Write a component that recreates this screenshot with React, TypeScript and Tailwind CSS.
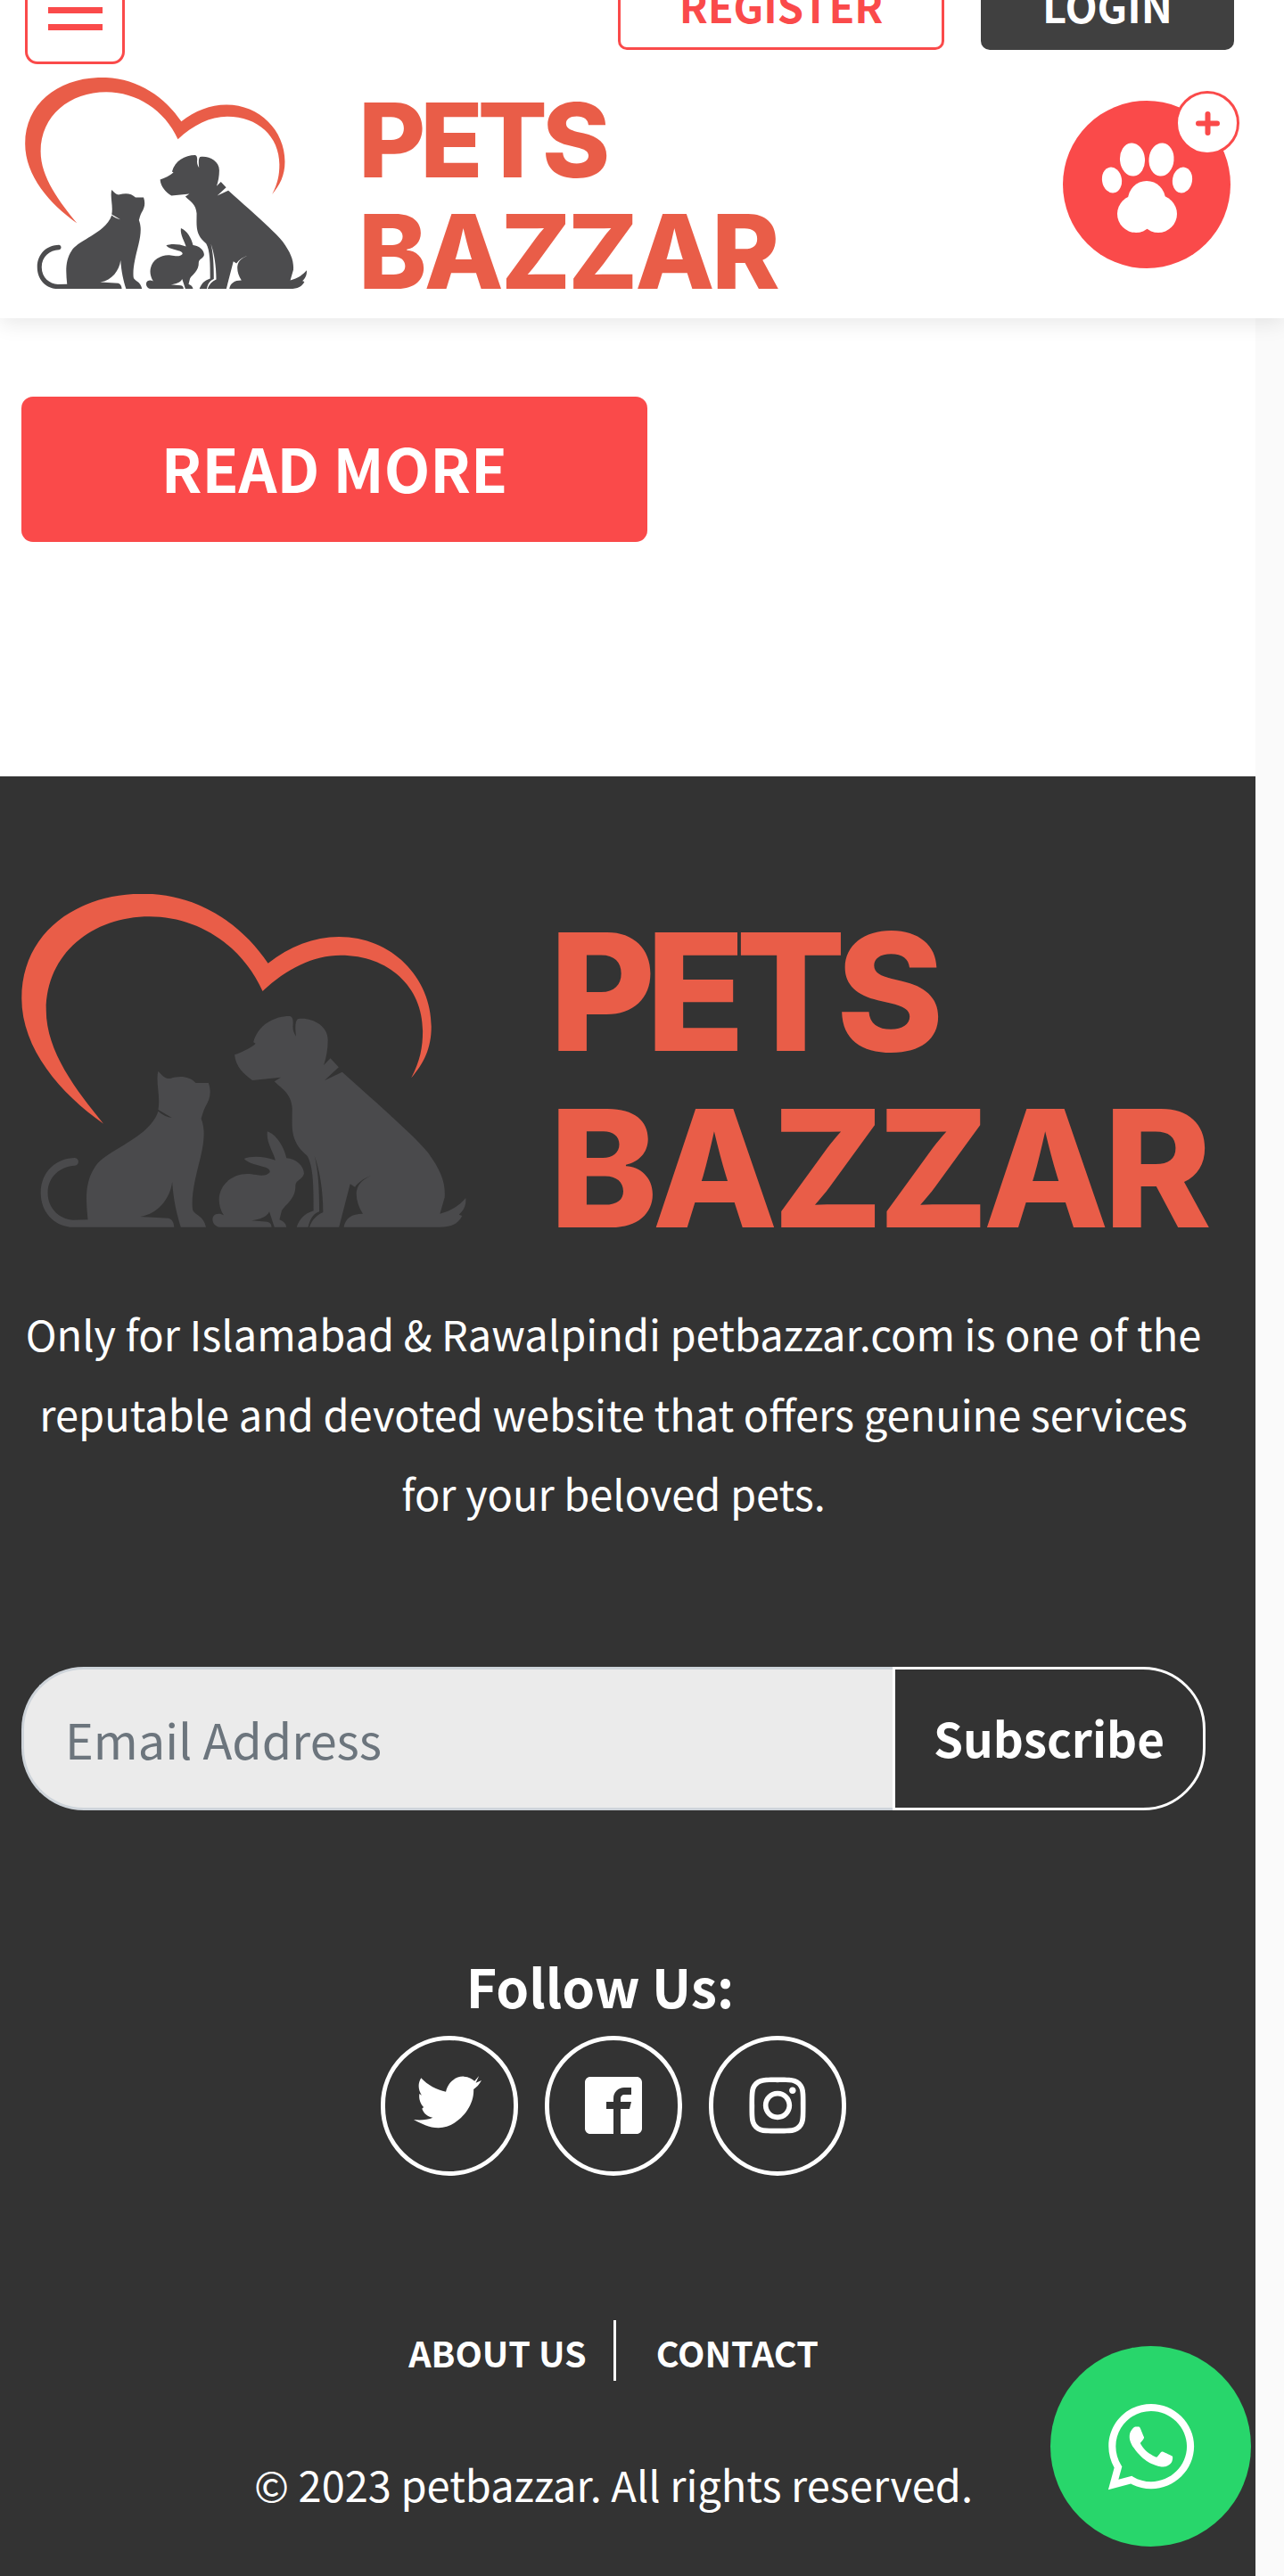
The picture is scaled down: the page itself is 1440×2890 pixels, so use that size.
import { FaInstagram, FaWhatsapp } from 'react-icons/fa'
import { ImFacebook2 } from 'react-icons/im'

/* Logo drawing, points taken from the footer logo */
const LogoMark: React.FC<{ className: string; animal: string }> = ({ className, animal }) => (
  <svg viewBox="24 1003 500 375" className={className}>
    <g transform="translate(0 980) scale(0.357 0.3333)">
      <path
        fill="#e95d48"
        d="M325,842 C190,740 68,590 68,420 C68,200 240,68 450,68 C620,68 760,170 842,302 C910,245 985,213 1065,213 C1230,213 1355,350 1355,515 C1355,590 1330,640 1292,688 C1320,630 1328,585 1328,530 C1328,380 1220,275 1070,275 C985,275 900,320 825,396 C760,240 620,145 470,145 C290,145 145,270 145,460 C145,600 240,730 325,842 Z"
      />
      {/* dog */}
      <path
        fill={animal}
        d="M737,610 C760,600 785,590 803,572 L796,568 C810,510 860,480 910,480 C920,482 922,495 920,515 C920,530 925,540 930,548 C928,530 925,500 935,490 C975,482 1030,510 1030,560 C1030,590 1025,620 1017,645 L1038,622 L1064,652 L1020,696 L1075,668 C1170,760 1290,870 1345,940 C1385,1000 1400,1040 1397,1090 L1382,1145 C1420,1135 1445,1115 1463,1092 C1465,1120 1455,1135 1442,1148 L1452,1152 C1440,1178 1420,1190 1380,1190 L1080,1190 C1085,1160 1105,1145 1140,1145 C1125,1120 1118,1095 1120,1070 C1125,1040 1145,1025 1175,1013 C1150,1022 1128,1035 1115,1055 L1100,1045 L1065,1190 L972,1190 C980,1165 995,1150 1015,1140 C1015,1070 1005,1000 988,950 C1000,1000 1003,1060 1003,1138 C985,1145 975,1160 968,1190 L932,1190 C940,1165 955,1145 985,1135 C985,1060 985,985 965,950 C910,900 918,860 918,790 C915,740 885,725 862,700 L882,686 L793,696 C765,675 740,650 737,610 Z"
      />
      {/* cat */}
      <path
        fill={animal}
        d="M497,665 C510,680 520,692 535,690 C565,680 595,682 615,705 L655,705 C665,735 660,760 645,785 C638,800 635,815 632,825 C645,860 642,900 630,955 C615,1020 600,1080 605,1130 C610,1150 640,1150 647,1190 L568,1190 C555,1145 545,1100 541,1038 C535,1090 500,1145 440,1155 L530,1160 C542,1165 546,1175 547,1190 L220,1190 C170,1185 128,1140 128,1075 C128,1000 180,958 235,957 C250,958 250,982 235,983 C190,985 150,1020 150,1075 C150,1130 190,1165 230,1166 L276,1165 C270,1100 265,1040 300,985 C335,930 470,890 497,800 C510,812 525,820 540,822 L497,795 C505,750 488,700 497,665 Z"
      />
      {/* rabbit */}
      <path
        fill={animal}
        d="M840,868 C870,880 892,920 900,958 C930,960 955,985 955,1010 C950,1030 930,1030 928,1050 C930,1095 895,1115 885,1135 L878,1165 C890,1170 898,1178 900,1190 L862,1190 L846,1138 C840,1155 815,1165 790,1168 L840,1172 C850,1175 853,1182 853,1190 L690,1190 C670,1188 660,1160 675,1148 C685,1143 695,1145 703,1150 C690,1130 685,1100 690,1080 C700,1030 750,1005 790,1012 C810,1015 835,1022 848,1005 C848,995 840,990 820,985 C800,978 780,975 767,960 C785,950 830,950 865,965 C860,940 835,905 840,868 Z"
      />
    </g>
  </svg>
)

const PawIcon: React.FC = () => (
  <svg viewBox="-94 -94 188 188" className="w-[188px] h-[188px]">
    <circle cx="0" cy="0" r="94" fill="#fa4a4a" />
    <g fill="#ffffff">
      <ellipse cx="-16" cy="-28" rx="14" ry="18.5" transform="rotate(-5 -16 -28)" />
      <ellipse cx="16.5" cy="-28" rx="14" ry="18.5" transform="rotate(5 16.5 -28)" />
      <ellipse cx="-39" cy="-5" rx="11" ry="14.5" transform="rotate(-10 -39 -5)" />
      <ellipse cx="40" cy="-5" rx="11" ry="14.5" transform="rotate(10 40 -5)" />
      <circle cx="0" cy="17" r="21" />
      <circle cx="-12" cy="33" r="21" />
      <circle cx="13" cy="33" r="21" />
    </g>
  </svg>
)

const BirdIcon: React.FC = () => (
  <svg viewBox="0 0 76 60" className="w-[76px] h-[60px] -ml-[4px] -mt-[6px]">
    <g transform="scale(0.357 0.3333) translate(-187 -480)">
      <path
        fill="#ffffff"
        d="M210,487 C230,510 260,528 288,533 C295,500 320,480 345,482 C360,483 370,490 378,497 L392,480 L382,503 L400,495 C392,510 385,518 375,525 C378,590 320,655 265,655 C235,655 210,640 187,627 C205,630 232,628 247,620 C230,618 218,605 213,590 L218,585 C208,575 202,555 205,540 L212,545 C200,525 200,505 210,487 Z"
      />
    </g>
  </svg>
)

const socials = [
  { name: 'twitter', icon: <BirdIcon /> },
  { name: 'facebook', icon: <ImFacebook2 size={64} /> },
  { name: 'instagram', icon: <FaInstagram size={72} /> },
]

const App: React.FC = () => {
  return (
    <div className="relative w-[1440px] h-[2890px] overflow-hidden bg-[#fafafa] font-['Noto_Sans_CJK_SC','Noto_Sans',sans-serif]">
      {/* HEADER */}
      <header className="relative z-10 h-[357px] bg-white shadow-[0_6px_22px_rgba(0,0,0,0.09)]">
        <div className="flex items-start h-[72px] pl-[28px] pr-[56px]">
          <button className="shrink-0 w-[112px] h-[116px] -mt-[44px] border-[3px] border-[#fa4a4a] rounded-[14px] flex flex-col items-center justify-end gap-[12px] pb-[35px]">
            <span className="block w-[61px] h-[7px] bg-[#fa4a4a]"></span>
            <span className="block w-[61px] h-[7px] bg-[#fa4a4a]"></span>
          </button>
          <button className="shrink-0 ml-auto w-[366px] h-[100px] -mt-[44px] border-[3px] border-[#fa4a4a] rounded-[10px] text-[#fa4a4a] text-[47px] font-bold leading-[92px]">
            REGISTER
          </button>
          <button className="shrink-0 ml-[41px] w-[284px] h-[100px] -mt-[44px] bg-[#404040] rounded-[10px] text-white text-[47px] font-bold leading-[98px]">
            LOGIN
          </button>
        </div>
        <div className="flex items-start justify-between pl-[28px] pr-[60px] mt-[15px]">
          <div className="flex items-start">
            <LogoMark className="shrink-0 w-[317px] h-[238px]" animal="#4c4c4e" />
            <div className="ml-[57px] mt-[8px] text-[#e95d48] font-['Inter',sans-serif] font-extrabold text-[115.5px] leading-[125px] whitespace-nowrap">
              <div className="tracking-[-6px]">PETS</div>
              <div className="tracking-[-3px]">BAZZAR</div>
            </div>
          </div>
          <div className="relative mt-[26px]">
            <PawIcon />
            <div className="absolute -top-[11px] -right-[10px] w-[72px] h-[72px] rounded-full bg-white border-[3px] border-[#fa4a4a] flex items-center justify-center">
              <svg viewBox="0 0 27 27" className="w-[27px] h-[27px]">
                <path d="M13.5 3v21M3 13.5h21" stroke="#fa4a4a" strokeWidth="6" strokeLinecap="round" />
              </svg>
            </div>
          </div>
        </div>
      </header>

      {/* CONTENT */}
      <main className="w-[1408px] h-[514px] bg-white pt-[88px] pl-[24px]">
        <a className="flex items-center justify-center w-[702px] h-[163px] pb-[4px] bg-[#fa4a4a] rounded-[13px] text-white text-[67px] font-bold">
          READ MORE
        </a>
      </main>

      {/* FOOTER */}
      <footer className="w-[1408px] h-[2019px] bg-[#333333] text-white pt-[132px] pl-[24px] pr-[56px] flex flex-col items-center">
        <div className="flex items-start w-full">
          <LogoMark className="shrink-0 w-[500px] h-[375px]" animal="#4a4a4c" />
          <div className="ml-[92px] mt-[11px] text-[#e95d48] font-['Inter',sans-serif] font-extrabold text-[183px] leading-[198px] whitespace-nowrap">
            <div className="tracking-[-11px]">PETS</div>
            <div className="tracking-[-6px]">BAZZAR</div>
          </div>
        </div>

        <p className="mt-[41px] w-full text-center text-[47px] leading-[89.5px]">
          Only for Islamabad &amp; Rawalpindi petbazzar.com is one of the reputable and devoted website that offers
          genuine services for your beloved pets.
        </p>

        <div className="flex w-full h-[161px] mt-[150px]">
          <input
            placeholder="Email Address"
            className="w-[977px] h-full bg-[#ebebeb] border-[3px] border-r-0 border-[#ced4da] rounded-l-[70px] pl-[46px] text-[54px] placeholder:text-[#6c757d] outline-none"
          />
          <button className="w-[351px] h-full border-[3px] border-white rounded-r-[70px] text-white text-[53px] font-bold">
            Subscribe
          </button>
        </div>

        <div className="mt-[152px] mr-[30px] text-[59px] font-bold leading-[90px]">Follow Us:</div>
        <div className="flex gap-[30px] mt-[11px]">
          {socials.map((s) => (
            <a
              key={s.name}
              className="flex items-center justify-center w-[154px] h-[157px] border-[5px] border-white rounded-full">
              {s.icon}
            </a>
          ))}
        </div>

        <div className="flex items-center mt-[162px] text-[39.5px] font-bold">
          <a className="pr-[30px] border-r-[3px] border-white h-[68px] leading-[72px]">ABOUT US</a>
          <a className="pl-[45px] h-[68px] leading-[72px]">CONTACT</a>
        </div>
        <div className="mt-[81px] text-[47px]">© 2023 petbazzar. All rights reserved.</div>
      </footer>

      {/* WHATSAPP */}
      <a className="absolute right-[37px] bottom-[33px] z-20 flex items-center justify-center w-[225px] h-[225px] rounded-full bg-[#28d66b] text-white">
        <FaWhatsapp size={110} />
      </a>
    </div>
  )
}

export default App
